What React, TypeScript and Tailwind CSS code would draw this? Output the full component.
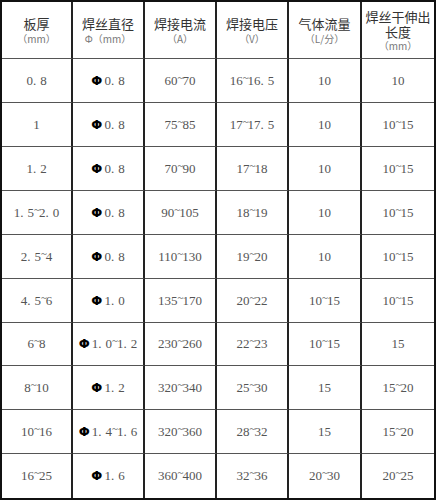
const HEADERS = [
  { title: ["板厚"], unit: "（mm）" },
  { title: ["焊丝直径"], unit: "Φ（mm）" },
  { title: ["焊接电流"], unit: "（A）" },
  { title: ["焊接电压"], unit: "（V）" },
  { title: ["气体流量"], unit: "（L/分）" },
  { title: ["焊丝干伸出", "长度"], unit: "（mm）" },
];

const ROWS: string[][] = [
  ["0.8", "Φ0.8", "60~70", "16~16.5", "10", "10"],
  ["1", "Φ0.8", "75~85", "17~17.5", "10", "10~15"],
  ["1.2", "Φ0.8", "70~90", "17~18", "10", "10~15"],
  ["1.5~2.0", "Φ0.8", "90~105", "18~19", "10", "10~15"],
  ["2.5~4", "Φ0.8", "110~130", "19~20", "10", "10~15"],
  ["4.5~6", "Φ1.0", "135~170", "20~22", "10~15", "10~15"],
  ["6~8", "Φ1.0~1.2", "230~260", "22~23", "10~15", "15"],
  ["8~10", "Φ1.2", "320~340", "25~30", "15", "15~20"],
  ["10~16", "Φ1.4~1.6", "320~360", "28~32", "15", "15~20"],
  ["16~25", "Φ1.6", "360~400", "32~36", "20~30", "20~25"],
];

const ROW_H = [44, 44, 44, 44, 44, 44, 43, 44, 44, 44];

// splits a value so the phi, tilde and decimal point can be styled like the printed table
function Value({ text }: { text: string }) {
  const phi = text.startsWith("Φ");
  const body = phi ? text.slice(1) : text;
  const parts = body.split(/([~.])/);
  return (
    <span className="whitespace-nowrap">
      {phi && (
        <span className="mr-[2px] font-['DejaVu_Sans',sans-serif] text-[13px] font-bold text-black">
          Φ
        </span>
      )}
      {parts.map((p, i) =>
        p === "~" ? (
          <span key={i} className="relative -top-[4px] text-[11px] tracking-[-1px]">
            ~
          </span>
        ) : p === "." ? (
          <span key={i} className="mr-[4px]">
            .
          </span>
        ) : (
          <span key={i}>{p}</span>
        )
      )}
    </span>
  );
}

export default function App() {
  return (
    <div className="h-[500px] w-[436px] bg-white">
      <div className="grid h-[500px] w-[436px] grid-cols-[71px_72px_72px_72px_73px_72px] border-2 border-[#111] font-['Liberation_Serif','Noto_Sans_CJK_SC',serif]">
        {HEADERS.map((h, c) => (
          <div
            key={c}
            className={`flex h-[57px] flex-col items-center justify-center border-b border-[#555] font-['Noto_Sans_CJK_SC',sans-serif] ${
              c < 5 ? "border-r-2 border-r-[#222]" : ""
            }`}
          >
            {h.title.map((t) => (
              <span
                key={t}
                className={`text-[13px] text-[#333] ${h.title.length > 1 ? "leading-[15px]" : "leading-[17px]"}`}
              >
                {t}
              </span>
            ))}
            <span className="text-[10px] leading-[13px] text-[#777]">{h.unit}</span>
          </div>
        ))}
        {ROWS.map((row, r) =>
          row.map((cell, c) => (
            <div
              key={`${r}-${c}`}
              style={{ height: ROW_H[r] }}
              className={`flex items-center justify-center text-[13px] text-[#555] ${
                r < ROWS.length - 1 ? "border-b border-[#555]" : ""
              } ${c < 5 ? "border-r-2 border-r-[#222]" : ""}`}
            >
              <Value text={cell} />
            </div>
          ))
        )}
      </div>
    </div>
  );
}
